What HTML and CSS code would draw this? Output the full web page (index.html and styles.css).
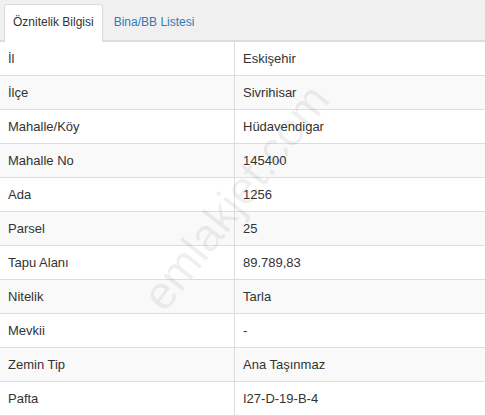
FILE: index.html
```html
<!DOCTYPE html>
<html lang="tr">
<head>
    <meta charset="UTF-8">
    <meta name="viewport" content="width=device-width, initial-scale=1.0">
    <title>Öznitelik Bilgisi</title>
    <link rel="stylesheet" href="styles.css">
</head>
<body>
    <div class="panel">
        <ul class="tabs">
            <li class="tab active"><a href="#">Öznitelik Bilgisi</a></li>
            <li class="tab"><a href="#">Bina/BB Listesi</a></li>
        </ul>

        <div class="tab-content">
            <table class="info-table">
                <tbody>
                    <tr><td>İl</td><td>Eskişehir</td></tr>
                    <tr><td>İlçe</td><td>Sivrihisar</td></tr>
                    <tr><td>Mahalle/Köy</td><td>Hüdavendigar</td></tr>
                    <tr><td>Mahalle No</td><td>145400</td></tr>
                    <tr><td>Ada</td><td>1256</td></tr>
                    <tr><td>Parsel</td><td>25</td></tr>
                    <tr><td>Tapu Alanı</td><td>89.789,83</td></tr>
                    <tr><td>Nitelik</td><td>Tarla</td></tr>
                    <tr><td>Mevkii</td><td>-</td></tr>
                    <tr><td>Zemin Tip</td><td>Ana Taşınmaz</td></tr>
                    <tr><td>Pafta</td><td>I27-D-19-B-4</td></tr>
                </tbody>
            </table>
            <span class="watermark">emlakjet.com</span>
        </div>
    </div>
</body>
</html>
```

FILE: styles.css
```css
body {
    margin: 0;
    font-family: "Liberation Sans", Arial, sans-serif;
    font-size: 13px;
    color: #333;
    background: #fff;
    overflow: hidden;
}
.panel {
    width: 485px;
}
.tabs {
    list-style: none;
    margin: 0;
    padding: 4px 0 0 4px;
    display: flex;
    background-color: #f0f0f0;
    border-bottom: 2px solid #dcdcdc;
}
.tab {
    margin-right: 2px;
    margin-bottom: -2px;
}
.tab a {
    display: block;
    padding: 9px 8px 10px;
    font-size: 12px;
    line-height: 16px;
    color: #337ab7;
    text-decoration: none;
    border: 1px solid transparent;
    border-bottom: none;
    border-radius: 3px 3px 0 0;
}
.tab.active a {
    color: #333;
    background: #fff;
    border-color: #dcdcdc;
    padding-bottom: 12px;
}
.tab-content {
    position: relative;
}
.info-table {
    width: 100%;
    border-collapse: collapse;
}
.info-table td {
    padding: 8px 8px;
    line-height: 17px;
    border-bottom: 1px solid #ddd;
}
.info-table td:first-child {
    width: 218px;
    border-right: 1px solid #ddd;
}
.info-table tr:nth-child(even) td {
    background-color: #f9f9f9;
}
.watermark {
    position: absolute;
    left: 100px;
    top: 128px;
    font-size: 46px;
    color: rgba(0, 0, 0, 0.07);
    transform: rotate(-52deg);
    pointer-events: none;
    white-space: nowrap;
}
```
